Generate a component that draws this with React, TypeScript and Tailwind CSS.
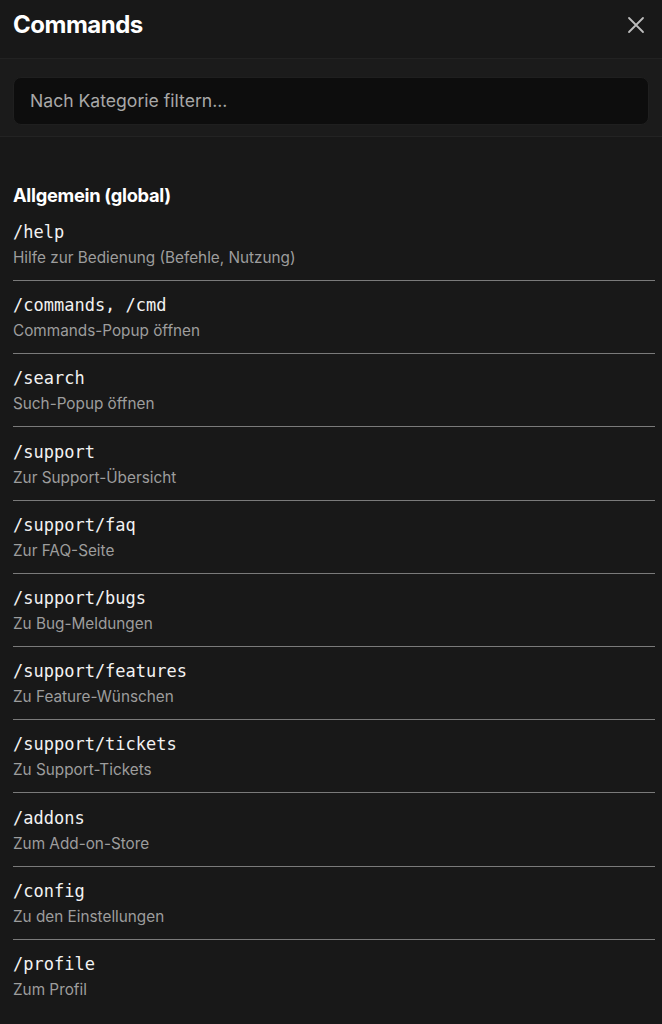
import React from "react";

const items: [string, string][] = [
  ["/help", "Hilfe zur Bedienung (Befehle, Nutzung)"],
  ["/commands, /cmd", "Commands-Popup öffnen"],
  ["/search", "Such-Popup öffnen"],
  ["/support", "Zur Support-Übersicht"],
  ["/support/faq", "Zur FAQ-Seite"],
  ["/support/bugs", "Zu Bug-Meldungen"],
  ["/support/features", "Zu Feature-Wünschen"],
  ["/support/tickets", "Zu Support-Tickets"],
  ["/addons", "Zum Add-on-Store"],
  ["/config", "Zu den Einstellungen"],
  ["/profile", "Zum Profil"],
];

export default function App() {
  return (
    <div className="w-[662px] h-[1024px] overflow-hidden bg-[#181818] text-white font-['Inter',sans-serif]">
      <div className="h-[59px] pb-[8px] flex items-center justify-between pl-[13px] pr-[16px] border-b border-[#222222]">
        <h1 className="text-[24px] font-bold tracking-[-0.5px] leading-none">Commands</h1>
        <svg width="20" height="20" viewBox="0 0 20 20" className="text-[#bdbdbd]">
          <path d="M3 3 L17 17 M17 3 L3 17" stroke="currentColor" strokeWidth="1.8" strokeLinecap="round" />
        </svg>
      </div>
      <div className="bg-[#1b1b1b] pt-[18px] pb-[11px] px-[13px] border-b border-[#232323]">
        <div className="h-[48px] rounded-[8px] bg-[#0d0d0d] border border-[#1f1f1f] flex items-center px-[16px]">
          <span className="text-[17.6px] text-[#a8a8a8]">Nach Kategorie filtern...</span>
        </div>
      </div>
      <div className="pt-[44px] pl-[13px] pr-[7px]">
        <h2 className="text-[18.3px] font-bold leading-[28px] tracking-[-0.3px] mb-[11px]">Allgemein (global)</h2>
        <div className="flex flex-col">
          {items.map(([cmd, desc], i) => (
            <div
              key={cmd}
              className={i === items.length - 1 ? "" : "pb-[12.1px] border-b border-[#7a7a7a]"}
            >
              <div className={i === 0 ? "" : "pt-[12.1px]"}>
                <div className="font-['DejaVu_Sans_Mono',monospace] text-[17px] leading-[24px] text-[#f2f2f2]">{cmd}</div>
                <div className="mt-[4px] text-[15.3px] leading-[20px] text-[#9d9d9d]">{desc}</div>
              </div>
            </div>
          ))}
        </div>
      </div>
    </div>
  );
}
